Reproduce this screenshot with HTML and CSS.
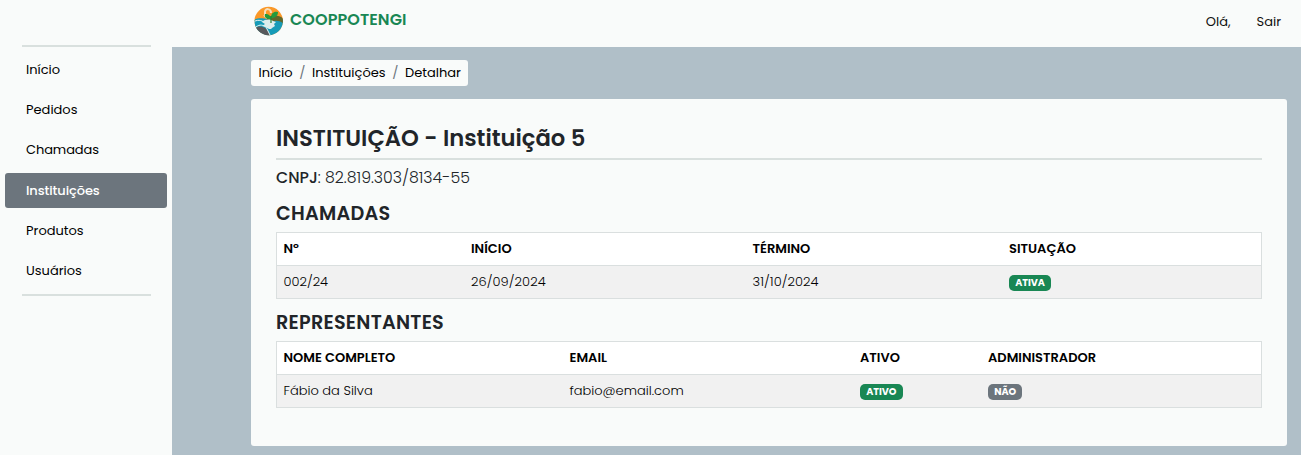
FILE: index.html
```html
<!DOCTYPE html>
<html lang="pt-BR">
<head>
<meta charset="utf-8">
<title>COOPPOTENGI</title>
<link rel="stylesheet" href="styles.css">
</head>
<body>
<div class="app">
  <aside class="sidebar">
    <nav class="menu">
      <a class="item inicio">Início</a>
      <a class="item pedidos">Pedidos</a>
      <a class="item chamadas">Chamadas</a>
      <a class="item active">Instituições</a>
      <a class="item produtos">Produtos</a>
      <a class="item usuarios">Usuários</a>
    </nav>
  </aside>
  <div class="page">
    <header class="topbar">
      <div class="brand">
        <svg class="logo" viewBox="0 0 30 30">
          <defs><clipPath id="disc"><circle cx="14.700" cy="15" r="14.2"/></clipPath></defs>
          <g clip-path="url(#disc)">
            <rect width="30" height="30" fill="#fa9828"/>
            <path d="M0 14C6 11 10 13 14 13L30 13V30H0Z" fill="#169bb8"/>
            <path d="M12 13C19 8 25 9 30 13V18C25 14 20 14 17 17Z" fill="#62672a"/>
            <path d="M0 22C8 18 14 22 16 30H0Z" fill="#57585b"/>
            <path d="M0 15.500C5 13 9 15 11 17M2 21C6 18 9 19 12 21L16 29" fill="none" stroke="#e9f4f3" stroke-width="1"/>
            <path d="M8 16C11 13 16 13 19 15L22 16L20 18L21 20L18 22C17 24 14 23 12 21L8 20L11 18Z" fill="#dceeed"/>
            <path d="M11 9V6C11 2 17 2 17 7M10 9L13 12" fill="none" stroke="#f5dfbc" stroke-width="2"/>
            <path d="M17 13C12 13 10 11 11 8C15 8 17 10 17 13ZM17 12C17 7 20 5 24 6C24 10 21 12 17 12Z" fill="#239b3d"/>
            <path d="M17 17V10" stroke="#218339" stroke-width="1.200"/>
          </g>
        </svg>
        <span class="name">COOPPOTENGI</span>
      </div>
      <div class="user"><span class="ola">Olá,</span><a class="sair">Sair</a></div>
    </header>
    <main class="content">
      <nav class="crumbs"><a class="c1">Início</a><i>/</i><a class="c2">Instituições</a><i>/</i><a class="c3">Detalhar</a></nav>
      <section class="card">
        <h1>INSTITUIÇÃO - Instituição 5</h1>
        <p class="cnpj"><b>CNPJ</b>: 82.819.303/8134-55</p>
        <h2 class="h-cha">CHAMADAS</h2>
        <table class="table">
          <colgroup><col class="a1"><col class="a2"><col class="a3"><col></colgroup>
          <tr><th>Nº</th><th>INÍCIO</th><th>TÉRMINO</th><th>SITUAÇÃO</th></tr>
          <tr><td>002/24</td><td class="date">26/09/2024</td><td class="date">31/10/2024</td><td><span class="badge">ATIVA</span></td></tr>
        </table>
        <h2 class="h-rep">REPRESENTANTES</h2>
        <table class="table">
          <colgroup><col class="b1"><col class="b2"><col class="b3"><col></colgroup>
          <tr><th>NOME COMPLETO</th><th>EMAIL</th><th>ATIVO</th><th>ADMINISTRADOR</th></tr>
          <tr><td>Fábio da Silva</td><td>fabio@email.com</td><td><span class="badge">ATIVO</span></td><td><span class="badge no">NÃO</span></td></tr>
        </table>
      </section>
    </main>
  </div>
</div>
</body>
</html>
```
FILE: styles.css
```css
* { box-sizing: border-box; }
body { margin: 0; font-family: Poppins, Inter, "Open Sans", sans-serif; font-size: 13px; color: #212529; background: #b0bfc8; }
.app { display: flex; height: 455px; overflow: hidden; }
.sidebar { width: 172px; flex: none; background: #f9fbfa; padding: 45px 5px 0; }
.menu { display: flex; flex-direction: column; gap: 5.15px; }
.menu::before, .menu::after { content: ""; height: 2px; margin: 0 16px 0 17px; background: #d9e0de; }
.menu::after { margin-top: 1px; }
.item { height: 35px; line-height: 35px; padding-left: 21px; border-radius: 3px; color: #000; }
.item.chamadas { letter-spacing: -0.1px; }
.item.active { background: #6c757d; color: #fff; font-weight: 500; letter-spacing: -0.1px; }
.page { flex: 1; min-width: 0; }
.topbar { height: 47px; background: #f9fbfa; display: flex; justify-content: space-between; padding: 0 20px 0 82px; }
.brand { display: flex; gap: 6px; padding-top: 6px; }
.logo { width: 30px; height: 30px; }
.name { font-size: 16px; font-weight: 600; line-height: 28px; letter-spacing: 0.08px; color: #198754; }
.user { display: flex; gap: 26px; line-height: 43px; color: #111; }
.content { padding: 13px 14px 0 79px; }
.crumbs { display: flex; width: 217px; height: 26px; line-height: 26px; padding: 0 7px 0 7.5px; justify-content: space-between; background: #f9fbfa; border-radius: 3px; color: #000; white-space: nowrap; }
.crumbs i { font-style: normal; color: #6c757d; }
.card { margin-top: 13px; height: 347px; padding: 25px 25px 0; background: #f9fbfa; border-radius: 3px; }
h1, h2, p { margin: 0; white-space: nowrap; }
h1 { height: 36px; line-height: 29px; font-size: 22.7px; font-weight: 600; border-bottom: 2px solid #d9e0de; }
.cnpj { font-size: 15.75px; font-weight: 300; line-height: 22px; padding-top: 7px; height: 41px; }
.cnpj b { font-weight: 500; }
h2 { font-size: 19.2px; font-weight: 600; line-height: 25px; height: 31px; letter-spacing: 0.25px; }
.h-rep { margin-top: 11px; }
.table { width: 986px; table-layout: fixed; border-collapse: collapse; border: 1px solid #dadfdf; }
.table tr { height: 33px; background: #fff; border-bottom: 1px solid #dadfdf; }
.table tr + tr { background: #f1f1f1; }
th, td { padding: 0 6.5px; text-align: left; white-space: nowrap; height: 33px; line-height: 20px; color: #000; }
th { font-weight: 600; }
td { font-weight: 300; }
.date { letter-spacing: 0.06px; }
.a1 { width: 188px; } .a2 { width: 281.5px; } .a3 { width: 256.5px; }
.b1 { width: 286.5px; } .b2 { width: 290.5px; } .b3 { width: 128px; }
.badge { display: block; width: fit-content; height: 16px; margin-top: 2px; padding: 0 6.2px; font-size: 9.7px; letter-spacing: -0.05px; line-height: 16px; font-weight: 700; color: #fff; background: #198754; border-radius: 5px; }
.badge.no { background: #6c757d; }
```
